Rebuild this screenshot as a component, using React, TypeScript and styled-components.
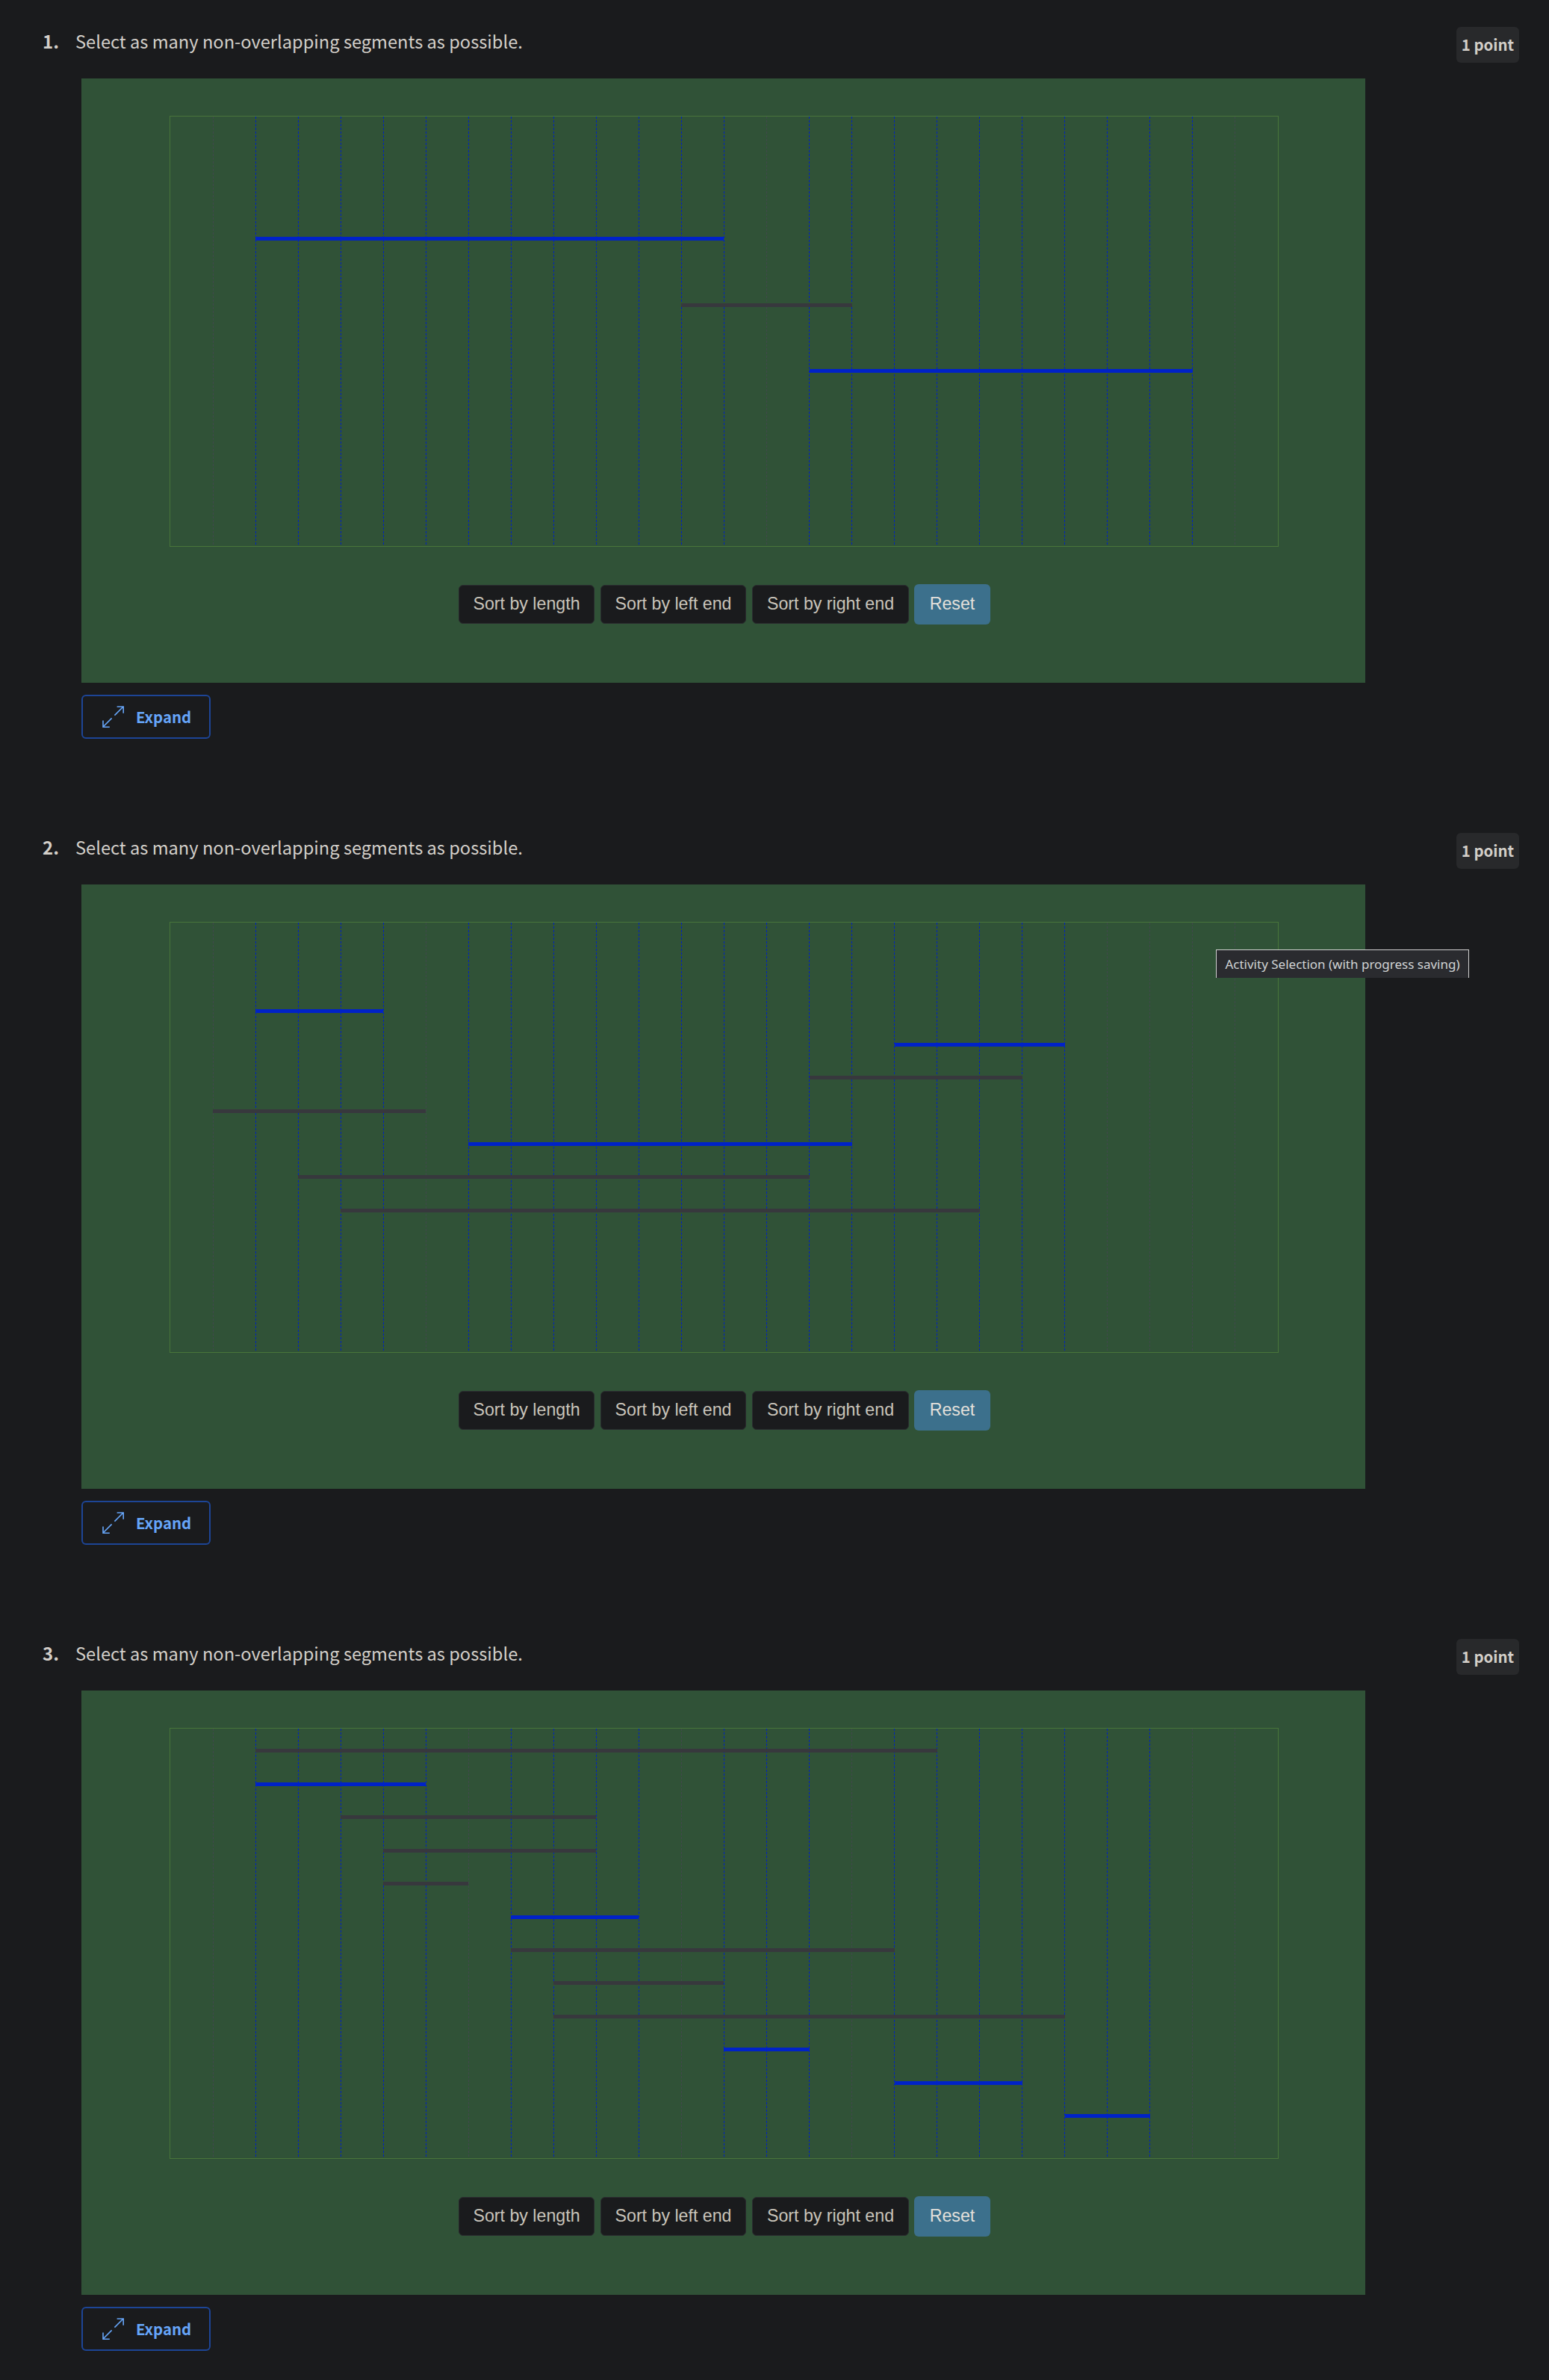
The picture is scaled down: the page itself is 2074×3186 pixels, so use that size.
import React from "react";
import styled, { createGlobalStyle } from "styled-components";

const GlobalStyle = createGlobalStyle`
  body { margin: 0; background: #1a1b1d; color: #d3cfc9; font-family: "Noto Sans CJK SC", "Noto Sans", sans-serif; }
  *, *::before, *::after { box-sizing: border-box; }
`;

type Seg = { from: number; to: number; row: number; on?: boolean };
type Question = { segs: Seg[]; tooltip?: string };

const LINE_STEP = 57;
const ROW = 44.42;
const barX = (k: number) => Math.round(k * 57.04 - 0.05);

const questions: Question[] = [
  {
    segs: [
      { from: 2, to: 13, row: 3, on: true },
      { from: 12, to: 16, row: 5 },
      { from: 15, to: 24, row: 7, on: true },
    ],
  },
  {
    tooltip: "Activity Selection (with progress saving)",
    segs: [
      { from: 2, to: 5, row: 2, on: true },
      { from: 17, to: 21, row: 3, on: true },
      { from: 15, to: 20, row: 4 },
      { from: 1, to: 6, row: 5 },
      { from: 7, to: 16, row: 6, on: true },
      { from: 3, to: 15, row: 7 },
      { from: 4, to: 19, row: 8 },
    ],
  },
  {
    segs: [
      { from: 2, to: 18, row: 0 },
      { from: 2, to: 6, row: 1, on: true },
      { from: 4, to: 10, row: 2 },
      { from: 5, to: 10, row: 3 },
      { from: 5, to: 7, row: 4 },
      { from: 8, to: 11, row: 5, on: true },
      { from: 8, to: 17, row: 6 },
      { from: 9, to: 13, row: 7 },
      { from: 9, to: 21, row: 8 },
      { from: 13, to: 15, row: 9, on: true },
      { from: 17, to: 20, row: 10, on: true },
      { from: 21, to: 23, row: 11, on: true },
    ],
  },
];

const Page = styled.main`
  width: 2074px;
  height: 3186px;
  overflow: hidden;
`;
const Item = styled.section`
  height: 1079px;
  padding: 36px 40px 0 57px;
  display: flex;
  flex-direction: column;
`;
const Head = styled.header`
  display: flex;
  align-items: flex-start;
  height: 69px;
`;
const Num = styled.span`
  width: 44px;
  font-size: 24px;
  font-weight: 700;
  line-height: 38px;
`;
const Prompt = styled.span`
  flex: 1;
  font-size: 23.65px;
  line-height: 38px;
  white-space: nowrap;
`;
const Points = styled.span`
  width: 84px;
  height: 48px;
  border-radius: 6px;
  background: #28292b;
  font-size: 20.4px;
  font-weight: 700;
  line-height: 47px;
  text-align: center;
  white-space: nowrap;
`;
const Panel = styled.div`
  position: relative;
  width: 1719px;
  height: 809px;
  margin-left: 52px;
  padding: 50px 0 0 118px;
  background: #305237;
`;
const Plot = styled.div`
  width: 1485px;
  height: 577px;
  border: 1px solid #48753a;
  svg { display: block; }
`;
const Buttons = styled.div`
  display: flex;
  align-items: center;
  width: 1485px;
  justify-content: center;
  gap: 8px;
  margin-top: 50px;
`;
const SortButton = styled.button<{ $primary?: boolean; $w: number }>`
  width: ${(p) => p.$w}px;
  height: ${(p) => (p.$primary ? 54 : 52)}px;
  margin-left: ${(p) => (p.$primary ? -1 : 0)}px;
  padding: 0 0 2px 1px;
  border: ${(p) => (p.$primary ? "0" : "1px solid #2a2b2f")};
  border-radius: 6px;
  background: ${(p) => (p.$primary ? "#3c708c" : "#1a1b1d")};
  color: ${(p) => (p.$primary ? "#e3e0db" : "#c9c4ba")};
  font: 23.2px "Liberation Sans", Arial, sans-serif;
  white-space: nowrap;
`;
const ExpandButton = styled.button`
  display: flex;
  align-items: center;
  width: 173px;
  height: 59px;
  margin: 16px 0 0 52px;
  padding: 0 0 0 26px;
  gap: 15px;
  border: 2px solid #1d4596;
  border-radius: 6px;
  background: transparent;
  color: #66a5f8;
  font: 700 20.4px "Noto Sans CJK SC", "Noto Sans", sans-serif;
`;
const ExpandLabel = styled.span`
  padding-bottom: 2px;
`;
const Tooltip = styled.div`
  position: absolute;
  left: 1519px;
  top: 87px;
  width: 339px;
  height: 38px;
  border: 1px solid #d0d0d0;
  border-bottom: 0;
  background: #2a2b2f;
  color: #d0d3d4;
  font: 17px/38px "Noto Sans", sans-serif;
  text-align: center;
  white-space: nowrap;
`;

function Chart({ segs }: { segs: Seg[] }) {
  const chosen = segs.filter((s) => s.on);
  const lines = Array.from({ length: 25 }, (_, i) => i + 1);
  return (
    <svg width="1483" height="575" shapeRendering="crispEdges">
      {lines.map((k) => {
        const on = chosen.some((s) => k >= s.from && k <= s.to);
        const x = k * LINE_STEP + 0.5;
        return (
          <line key={k} x1={x} x2={x} y1="0" y2="575" stroke={on ? "#0022c0" : "#40484b"} strokeDasharray="3 2" />
        );
      })}
      {segs.map((s) => (
        <rect
          key={s.row}
          x={barX(s.from)}
          y={Math.round(27.45 + s.row * ROW)}
          width={barX(s.to) - barX(s.from)}
          height="5"
          fill={s.on ? "#0022c8" : "#37383d"}
        />
      ))}
    </svg>
  );
}

function ExpandIcon() {
  return (
    <svg width="30" height="30" viewBox="0 0 30 30" fill="none" stroke="currentColor" strokeWidth="1.6">
      <path d="M16.4 12.6 28 1M19.6 1h8.6v8.8M12.6 16.4 1 28M1 19.6v8.6h8.8" />
    </svg>
  );
}

export default function App() {
  return (
    <Page>
      <GlobalStyle />
      {questions.map((q, i) => (
        <Item key={i}>
          <Head>
            <Num>{i + 1}.</Num>
            <Prompt>Select as many non-overlapping segments as possible.</Prompt>
            <Points>1 point</Points>
          </Head>
          <Panel>
            <Plot>
              <Chart segs={q.segs} />
            </Plot>
            <Buttons>
              <SortButton $w={182}>Sort by length</SortButton>
              <SortButton $w={195}>Sort by left end</SortButton>
              <SortButton $w={210}>Sort by right end</SortButton>
              <SortButton $w={102} $primary>Reset</SortButton>
            </Buttons>
            {q.tooltip && <Tooltip>{q.tooltip}</Tooltip>}
          </Panel>
          <ExpandButton>
            <ExpandIcon />
            <ExpandLabel>Expand</ExpandLabel>
          </ExpandButton>
        </Item>
      ))}
    </Page>
  );
}
